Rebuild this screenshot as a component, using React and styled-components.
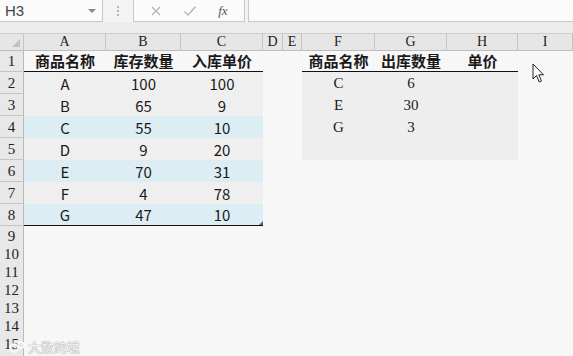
import React from 'react';
import styled, { createGlobalStyle } from 'styled-components';

const Global = createGlobalStyle`
  html, body { margin: 0; padding: 0; background: #f7f7f7; }
  body { width: 573px; height: 356px; overflow: hidden; }
`;

const TEMPLATE = '24px 82px 75px 82px 20px 19px 73px 72px 71px 1fr';
const LETTERS = ['A', 'B', 'C', 'D', 'E', 'F', 'G', 'H', 'I'];

const Page = styled.div`
  position: relative;
  width: 573px;
  height: 356px;
  overflow: hidden;
  background: #f7f7f7;
  font-family: "Liberation Sans", Arial, sans-serif;
`;

const FormulaBar = styled.div`
  display: flex;
  height: 22px;
  background: #f3f3f3;
`;

const NameBox = styled.div`
  width: 103px;
  box-sizing: border-box;
  display: flex;
  align-items: center;
  justify-content: space-between;
  padding: 0 6px 0 5px;
  background: #fbfbfb;
  border-right: 1px solid #c9c9c9;
  border-bottom: 1px solid #c9c9c9;
  font-size: 15px;
  color: #444;
`;

const Caret = styled.span`
  width: 0;
  height: 0;
  border-left: 4px solid transparent;
  border-right: 4px solid transparent;
  border-top: 4px solid #8a8a8a;
`;

const Grip = styled.div`
  width: 30px;
  display: flex;
  flex-direction: column;
  align-items: center;
  justify-content: center;
  gap: 2px;
  & > i {
    width: 2px;
    height: 2px;
    background: #b5b5b5;
    display: block;
  }
`;

const IconBox = styled.div`
  width: 112px;
  box-sizing: border-box;
  display: flex;
  align-items: center;
  justify-content: space-around;
  padding: 0 6px;
  background: #fbfbfb;
  border: 1px solid #c9c9c9;
  border-top: none;
`;

const FxText = styled.span`
  font-family: "Liberation Serif", serif;
  font-style: italic;
  font-size: 13px;
  color: #555;
`;

const FormulaInput = styled.div`
  flex: 1;
  margin-left: 3px;
  background: #fbfbfb;
  border-left: 1px solid #c9c9c9;
  border-bottom: 1px solid #c9c9c9;
`;

const Band = styled.div`
  height: 11px;
  background: #ececec;
`;

const Row = styled.div`
  display: grid;
  grid-template-columns: ${TEMPLATE};
  height: ${(p) => p.$h}px;
`;

const ColHead = styled.div`
  box-sizing: border-box;
  display: flex;
  align-items: center;
  justify-content: center;
  background: #e6e6e6;
  border-top: 1px solid #cdcdcd;
  border-bottom: 1px solid #bdbdbd;
  border-right: 1px solid #c4c4c4;
  font-family: "Liberation Serif", serif;
  font-size: 14px;
  color: #222;
`;

const Corner = styled(ColHead)`
  position: relative;
  &::after {
    content: '';
    position: absolute;
    right: 3px;
    bottom: 3px;
    width: 0;
    height: 0;
    border-left: 8px solid transparent;
    border-bottom: 8px solid #c2c2c2;
  }
`;

const RowHead = styled.div`
  box-sizing: border-box;
  display: flex;
  align-items: center;
  justify-content: center;
  padding-top: 2px;
  background: #e8e8e8;
  border-bottom: 1px solid #c4c4c4;
  border-right: 1px solid #b9b9b9;
  font-family: "Liberation Serif", serif;
  font-size: 15px;
  color: #222;
`;

const Cell = styled.div`
  position: relative;
  box-sizing: border-box;
  display: flex;
  align-items: center;
  justify-content: center;
  background: ${(p) => p.$bg || 'transparent'};
  border-bottom: ${(p) => (p.$line ? '1px solid #111' : 'none')};
  font-family: ${(p) =>
    p.$serif
      ? '"Liberation Serif", serif'
      : '"Noto Sans CJK SC", "Liberation Sans", sans-serif'};
  font-weight: ${(p) => (p.$bold ? 700 : 400)};
  font-size: 15px;
  color: #1a1a1a;
`;

const Handle = styled.span`
  position: absolute;
  right: 0;
  bottom: 0;
  width: 0;
  height: 0;
  border-left: 4px solid transparent;
  border-bottom: 4px solid #4a5ea8;
`;

const Pointer = styled.svg`
  position: absolute;
  left: 532px;
  top: 63px;
`;

const Watermark = styled.div`
  position: absolute;
  left: 9px;
  top: 337px;
  display: flex;
  align-items: center;
  gap: 2px;
  font-family: "Noto Sans CJK SC", sans-serif;
  font-size: 13px;
  color: rgba(255, 255, 255, 0.9);
  text-shadow: 0 0 1px #9a9a9a, 0 0 1px #9a9a9a;
`;

const GRAY = '#efefef';
const BLUE = '#dcedf4';

const left = [
  ['A', '100', '100'],
  ['B', '65', '9'],
  ['C', '55', '10'],
  ['D', '9', '20'],
  ['E', '70', '31'],
  ['F', '4', '78'],
  ['G', '47', '10'],
];
const right = [
  ['C', '6', ''],
  ['E', '30', ''],
  ['G', '3', ''],
  ['', '', ''],
];

const rowBg = (i) => (i === 2 || i === 4 || i === 6 ? BLUE : GRAY);

export default function App() {
  const bodyRows = [];
  for (let i = 0; i < 7; i++) {
    const r = right[i];
    bodyRows.push(
      <Row $h={22} key={`r${i}`}>
        <RowHead>{i + 2}</RowHead>
        {left[i].map((v, j) => (
          <Cell key={j} $bg={rowBg(i)} $line={i === 6}>
            {v}
            {i === 6 && j === 2 && <Handle />}
          </Cell>
        ))}
        <Cell />
        <Cell />
        {r
          ? r.map((v, j) => (
              <Cell key={`b${j}`} $bg="#eeeeee" $serif>
                {v}
              </Cell>
            ))
          : [<Cell key="x1" />, <Cell key="x2" />, <Cell key="x3" />]}
        <Cell />
      </Row>
    );
  }
  const emptyRows = [];
  for (let n = 9; n <= 16; n++) {
    emptyRows.push(
      <Row $h={18} key={`e${n}`}>
        <RowHead>{n < 16 ? n : ''}</RowHead>
      </Row>
    );
  }

  return (
    <Page>
      <Global />
      <FormulaBar>
        <NameBox>
          H3
          <Caret />
        </NameBox>
        <Grip>
          <i />
          <i />
          <i />
        </Grip>
        <IconBox>
          <svg width="12" height="12" viewBox="0 0 12 12">
            <path d="M2 2 L10 10 M10 2 L2 10" stroke="#b4b4b4" strokeWidth="1.3" />
          </svg>
          <svg width="14" height="12" viewBox="0 0 14 12">
            <path d="M1.5 6.5 L5 10 L12.5 1.5" stroke="#b4b4b4" strokeWidth="1.4" fill="none" />
          </svg>
          <FxText>fx</FxText>
        </IconBox>
        <FormulaInput />
      </FormulaBar>
      <Band />
      <Row $h={17}>
        <Corner />
        {LETTERS.map((l) => (
          <ColHead key={l}>{l}</ColHead>
        ))}
      </Row>
      <Row $h={22}>
        <RowHead>1</RowHead>
        <Cell $bold $line>商品名称</Cell>
        <Cell $bold $line>库存数量</Cell>
        <Cell $bold $line>入库单价</Cell>
        <Cell />
        <Cell />
        <Cell $bold $line>商品名称</Cell>
        <Cell $bold $line>出库数量</Cell>
        <Cell $bold $line>单价</Cell>
        <Cell />
      </Row>
      {bodyRows}
      {emptyRows}
      <Pointer width="13" height="21" viewBox="0 0 13 21">
        <path
          d="M1 1 L1 16 L4.5 12.5 L7.2 19 L9.5 18 L6.8 11.8 L11.5 11.8 Z"
          fill="#fff"
          stroke="#222"
          strokeWidth="1"
          strokeLinejoin="round"
        />
      </Pointer>
      <Watermark>
        <svg width="17" height="12" viewBox="0 0 17 12">
          <circle cx="5" cy="7" r="4" fill="none" stroke="#fff" strokeWidth="1.5" />
          <circle cx="12" cy="4" r="3" fill="none" stroke="#fff" strokeWidth="1.3" />
        </svg>
        <span>大数跨境</span>
      </Watermark>
    </Page>
  );
}
